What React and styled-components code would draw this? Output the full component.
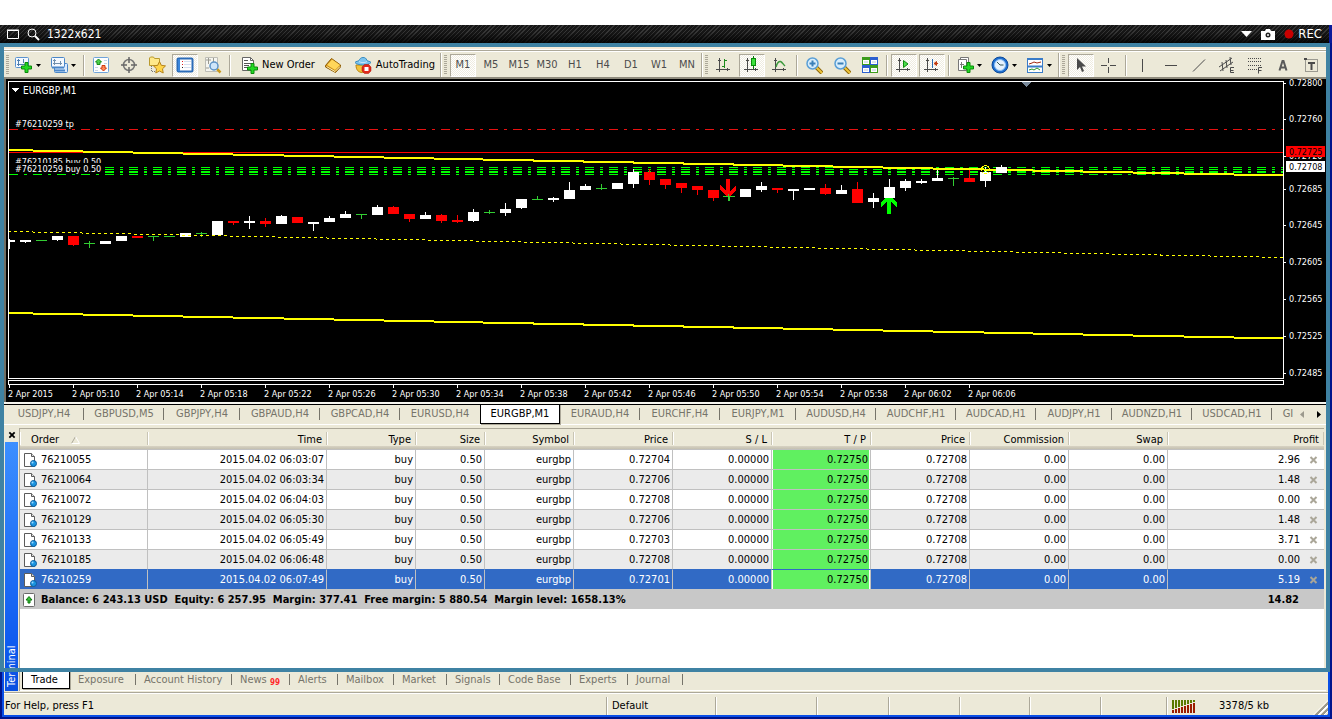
import React from "react";
import styled, { createGlobalStyle, css } from "styled-components";

const CREAM = "#ece9d8";
const GRAY = "#aca899";
const TEAL = "#3f82a3";
const FONT = '"DejaVu Sans Condensed", "DejaVu Sans", sans-serif';

const GlobalStyle = createGlobalStyle`
  *, *::before, *::after { box-sizing: border-box; }
  body { margin: 0; background: #fff; font: 11px/14px ${FONT}; color: #000; }
  button { font: inherit; color: inherit; border: 0; padding: 0; margin: 0; background: none; }
  svg { display: block; flex: none; }
`;

const Page = styled.div`
  display: flex;
  flex-direction: column;
  min-height: 100vh;
  padding-top: 25px;
`;

/* ---------- recorder bar ---------- */

const RecorderBar = styled.header`
  display: flex;
  align-items: center;
  justify-content: space-between;
  height: 18px;
  padding: 0 7px;
  border-right: 3px solid #0a1a9a;
  background:
    linear-gradient(rgba(0, 0, 0, 0) 40%, rgba(0, 0, 0, 0.85)),
    repeating-linear-gradient(135deg, #161616 0 2px, #363636 2px 3px);
  color: #fff;
  font-size: 12px;
`;

const RecorderGroup = styled.div`
  display: flex;
  align-items: center;
  gap: ${(p) => p.$gap}px;
`;

const RecordLabel = styled.span`
  font-size: 13px;
`;

/* ---------- window shell ---------- */

const Window = styled.main`
  position: relative;
  flex: 1;
  display: flex;
  flex-direction: column;
  padding-top: 4px;
  border: 2px solid #00148c;
  border-top: 0;
  background: ${CREAM};
`;

const WindowInner = styled.div`
  flex: 1;
  display: flex;
  flex-direction: column;
  min-width: 0;
  border: 2px solid #0a4fe6;
  border-top: 0;
`;

const CaptureFrame = styled.div`
  position: absolute;
  top: 0;
  left: -2px;
  right: 0;
  bottom: 45px;
  border: 4px solid ${TEAL};
  pointer-events: none;
`;

/* ---------- toolbar ---------- */

const Toolbar = styled.div`
  display: flex;
  height: 32px;
  border-top: 2px solid #f7ecd9;
  border-bottom: 2px solid #8f8b7d;
  box-shadow: inset 0 1px #fff, inset 0 2px ${GRAY}, inset 0 3px #fff;
  padding-top: 4px;
  overflow: hidden;
`;

const ToolGroup = styled.div`
  display: flex;
  align-items: center;
  flex: none;
  gap: 2px;
  padding-left: 2px;
  border-right: 1px solid ${GRAY};
  box-shadow: 1px 0 #fff;
  margin-right: 1px;
  padding-right: ${(p) => p.$end || 0}px;
  color: #4c4c4c;
  &:last-child { border-right: 0; box-shadow: none; }
`;

const Grip = styled.span`
  width: 3px;
  height: 20px;
  margin-right: 1px;
  background: repeating-linear-gradient(${GRAY} 0 1px, transparent 1px 2px);
`;

const Divider = styled.span`
  width: 2px;
  height: 21px;
  margin: 0 1px;
  border-left: 1px solid ${GRAY};
  border-right: 1px solid #fff;
`;

const ToolButton = styled.button`
  display: flex;
  align-items: center;
  justify-content: center;
  width: 26px;
  height: 23px;
  ${(p) =>
    p.$pressed &&
    css`
      border: 1px solid;
      border-color: ${GRAY} #fff #fff ${GRAY};
      background: conic-gradient(#fff 25%, #efece0 0 50%, #fff 0 75%, #efece0 0) 0 0 / 2px 2px;
    `}
`;

const DropButton = styled(ToolButton)`
  width: 33px;
  justify-content: flex-start;
  gap: 3px;
  padding-left: 3px;
`;

const TextButton = styled(ToolButton)`
  width: auto;
  gap: 4px;
  padding: 0 3px 0 6px;
  color: #000;
  white-space: nowrap;
`;

/* ---------- chart ---------- */

const ChartPane = styled.section`
  display: grid;
  grid-template-columns: minmax(0, 1fr) 44px;
  padding: 2px 0 0 2px;
  border-left: 2px solid #716f64;
  background: #000;
  color: #fff;
  overflow: hidden;
`;

const Plot = styled.div`
  height: 298px;
  border: 1px solid #fff;
`;

const ScrollStrip = styled.div`
  height: 5px;
  margin-top: 1px;
  border: 1px solid #fff;
`;

const TimeAxis = styled.div`
  display: flex;
  grid-column: 1 / -1;
  height: 17px;
  overflow: hidden;
  font-size: 9px;
  line-height: 18px;
`;

const TimeLabel = styled.span`
  flex: none;
  width: 64px;
  white-space: nowrap;
  background: linear-gradient(#fff, #fff) 1px 0 / 1px 3px no-repeat;
`;

/* ---------- tab strips ---------- */

const ChartTabs = styled.nav`
  display: flex;
  height: 23px;
  padding-bottom: 1px;
  border-top: 2px solid #f6f5ee;
  box-shadow: inset 0 1px #000, inset 0 -1px #fff;
  color: #76746a;
`;

const ChartTab = styled.button`
  flex: none;
  width: ${(p) => (p.$short ? 76 : 80)}px;
  height: 20px;
  background: linear-gradient(#76746a, #76746a) right 4px / 1px 12px no-repeat;
  ${(p) => p.$bare && "background: none;"}
  ${(p) =>
    p.$active &&
    css`
      border: 1px solid #000;
      background: #fff;
      color: #000;
      box-shadow: 1px 1px ${GRAY};
    `}
`;

const LastTab = styled.button`
  width: 24px;
  height: 20px;
  overflow: hidden;
  padding-left: 8px;
`;

const TabArrows = styled.div`
  display: flex;
  align-items: center;
  gap: 13px;
  margin-left: auto;
  padding-right: 7px;
`;

/* ---------- terminal ---------- */

const Terminal = styled.section`
  flex: 1;
  display: flex;
  padding: 3px 4px 1px 0;
`;

const TerminalRail = styled.div`
  display: flex;
  flex-direction: column;
  width: 15px;
  padding: 0 1px;
`;

const CloseButton = styled.button`
  display: flex;
  align-items: center;
  justify-content: center;
  height: 14px;
`;

const RailTitle = styled.div`
  flex: 1;
  background: linear-gradient(#0a50e0, #0f5cf0 20%, #3c8fff);
  color: #fff;
  writing-mode: vertical-rl;
  transform: rotate(180deg);
  padding-top: 4px;
  line-height: 13px;
`;

const TerminalBody = styled.div`
  flex: 1;
  min-width: 0;
  display: flex;
  flex-direction: column;
  border-top: 1px solid ${GRAY};
  border-left: 1px solid ${GRAY};
`;

const TableArea = styled.div`
  flex: 1;
  background: #fff;
`;

const OrdersTable = styled.table`
  width: 100%;
  table-layout: fixed;
  border-collapse: separate;
  border-spacing: 0;
`;

const HeadCell = styled.th`
  height: 20px;
  padding: 2px 5px 0;
  font-weight: normal;
  text-align: right;
  white-space: nowrap;
  background:
    linear-gradient(#c9c5b4, #c9c5b4) right 3px / 1px 13px no-repeat,
    linear-gradient(#fff, #fff) left 3px / 1px 13px no-repeat,
    linear-gradient(${CREAM} 17px, #d8d3c3 17px, #c4c0b0);
  &:first-child { text-align: left; padding-left: 11px; }
`;

const HeadInner = styled.span`
  display: inline-flex;
  align-items: center;
  gap: 12px;
`;

const Row = styled.tr`
  background: ${(p) => (p.$selected ? "#316ac5" : p.$odd ? "#ebebeb" : "#fff")};
  color: ${(p) => (p.$selected ? "#fff" : "#000")};
  & > td { border-top-color: ${(p) => (p.$selected ? "#316ac5" : "#c0c0c0")}; }
`;

const Cell = styled.td`
  height: 20px;
  padding: 0 2px 0 0;
  border-top: 1px solid;
  border-right: 1px solid #c0c0c0;
  text-align: right;
  white-space: nowrap;
  &:last-child { border-right: 0; }
  ${(p) =>
    p.$target &&
    css`
      background: #60f060;
      color: #000;
      box-shadow: inset 1px 0 #fff, inset -1px 0 #fff;
    `}
`;

const CellInner = styled.span`
  display: flex;
  align-items: center;
  justify-content: ${(p) => (p.$end ? "flex-end" : "flex-start")};
  gap: ${(p) => p.$gap}px;
  padding: ${(p) => (p.$end ? "0 4px 0 0" : "0 0 0 3px")};
`;

const SummaryCell = styled.td`
  height: 20px;
  padding: 1px 0 0;
  background: #c8c8c8;
  font-weight: bold;
  white-space: pre;
  text-align: right;
  &:last-child { padding-right: 25px; }
`;

const PanelTabs = styled.nav`
  display: flex;
  height: 20px;
  padding-left: 2px;
  margin-right: -2px;
  background: ${CREAM};
  border-bottom: 1px solid #fff;
  color: #76746a;
`;

const PanelTab = styled.button`
  flex: none;
  width: ${(p) => p.$w}px;
  height: 18px;
  padding-left: 8px;
  text-align: left;
  white-space: nowrap;
  background: linear-gradient(#76746a, #76746a) right 3px / 1px 11px no-repeat;
  ${(p) =>
    p.$bare && "background: none;"}
  ${(p) =>
    p.$active &&
    css`
      border: 1px solid #000;
      border-top: 0;
      background: #fff;
      color: #000;
      box-shadow: 1px 1px ${GRAY};
    `}
`;

const Unread = styled.sub`
  color: #ff2a2a;
  font-size: 8px;
  font-weight: bold;
  line-height: 9px;
  vertical-align: -2px;
`;

/* ---------- status bar ---------- */

const StatusBar = styled.footer`
  display: flex;
  align-items: flex-end;
  height: 23px;
  background: ${CREAM};
  box-shadow: inset 0 1px ${GRAY}, inset 0 2px #fff;
`;

const StatusText = styled.span`
  flex: 1;
  padding-left: 1px;
  line-height: 18px;
`;

const StatusCell = styled.span`
  flex: none;
  display: flex;
  align-items: center;
  width: ${(p) => p.$w}px;
  height: 18px;
  padding-left: 5px;
  gap: 23px;
  border-left: 1px solid ${GRAY};
  box-shadow: inset 1px 0 #fff;
`;

const SizeGrip = styled.span`
  width: 15px;
  height: 15px;
  margin-left: auto;
  align-self: flex-end;
  background: repeating-linear-gradient(135deg, #9d9a8c 0 2px, #fff 2px 3px, ${CREAM} 3px 4px);
  clip-path: polygon(100% 0, 100% 100%, 0 100%);
`;

/* ---------- icons ---------- */

const Svg = ({ size = 18, children, ...rest }) => (
  <svg width={size} height={size} viewBox="0 0 18 18" fill="none" aria-hidden="true" {...rest}>
    {children}
  </svg>
);

const Plus = ({ x = 7, y = 7 }) => (
  <path
    transform={`translate(${x} ${y})`}
    d="M4 .5h3V4h3.500v3H7v3.500H4V7H.5V4H4z"
    fill="#22d822"
    stroke="#0a8a0a"
  />
);

const Caret = () => (
  <svg width="5" height="3" viewBox="0 0 5 3" aria-hidden="true">
    <path d="M0 0h5L2.500 3z" fill="#000" />
  </svg>
);

const Axes = ({ color = "#4a4a4a" }) => (
  <path
    d="M4.500 2v14M1 13.500h14M3 4.500h3M12.500 12v3"
    stroke={color}
    shapeRendering="crispEdges"
  />
);

const icons = {
  newChart: (
    <Svg>
      <rect x="0.500" y="1.500" width="13" height="10" rx="1" fill="#f4f9ff" stroke="#5b93cf" />
      <path d="M3.500 3v7M2 8.500h9M2 4.500h3M8.500 3v4" stroke="#4f7fae" />
      <Plus x={6} y={6} />
    </Svg>
  ),
  profiles: (
    <Svg>
      <rect x="4.500" y="7.500" width="13" height="9" rx="1" fill="#d9eaff" stroke="#4a86c8" />
      <rect x="1.500" y="1.500" width="13" height="10" rx="1" fill="#f4f9ff" stroke="#4a86c8" />
      <path d="M2 11.500h12M5 14.500h10" stroke="#4a86c8" strokeWidth="2" />
      <path d="M4.500 3v6M3 7.500h9M10.500 5v4M3 4.500h3" stroke="#7390ac" />
    </Svg>
  ),
  market: (
    <Svg>
      <rect x="1.500" y="1.500" width="15" height="15" rx="1" fill="#fdfeff" stroke="#6fa3da" />
      <path d="M12 4.500h3M12 7.500h3M3 11.500h3M3 14.500h3" stroke="#c4d4e6" />
      <path d="M6.500 3l3 3H8v2.500H5V6H3.500z" fill="#4ad04a" stroke="#188a18" />
      <path d="M11.500 15l-3-3H10V9.500h3V12h1.500z" fill="#ff8a5a" stroke="#d03a10" />
    </Svg>
  ),
  target: (
    <Svg>
      <circle cx="9" cy="9" r="5.500" stroke="#777" strokeWidth="1.500" />
      <path d="M9 1v6M9 11v6M1 9h6M11 9h6" stroke="#666" strokeWidth="1.500" />
    </Svg>
  ),
  navigator: (
    <Svg>
      <path d="M1.500 9.500V2l1-1h3l1 1.500h5v7z" fill="#ffe98a" stroke="#b99a2e" />
      <path d="M3.500 10v5.500H8" stroke="#777" strokeDasharray="1 1" />
      <path d="M11.500 5.500l1.800 3.800 4.200.6-3 2.900.7 4.200-3.700-2-3.700 2 .7-4.200-3-2.900 4.200-.6z" fill="#ffd54a" stroke="#b5831a" />
    </Svg>
  ),
  terminal: (
    <Svg>
      <rect x="1.500" y="2.500" width="15" height="13" rx="1" fill="#fff" stroke="#2c6cb8" strokeWidth="2" />
      <path d="M3 3v12" stroke="#3a86dc" strokeWidth="2" />
      <path d="M6 5.500h1M6 8.500h1" stroke="#e02020" />
      <path d="M6 11.500h1" stroke="#222" />
      <path d="M8 5.500h7M8 8.500h7M8 11.500h7" stroke="#d4e0f0" />
    </Svg>
  ),
  tester: (
    <Svg>
      <path d="M1.500 1.500h12v14h-12z" fill="#f6f6f0" stroke="#bdbdb5" />
      <path d="M4.500 2v6M2 4h5M9.500 2v4M2 12h3" stroke="#9a9a90" />
      <path d="M13 13l3.500 3.500" stroke="#c99a1c" strokeWidth="2.500" />
      <circle cx="10" cy="10" r="4" fill="#cfe6fa" stroke="#5e93c6" strokeWidth="1.500" />
    </Svg>
  ),
  newOrder: (
    <Svg>
      <path d="M2.500 1.500h8l3 3v10h-11z" fill="#fff" stroke="#666" />
      <path d="M10.500 1.500v3h3" stroke="#666" />
      <path d="M4 4.500h4M4 7.500h7M4 9.500h5M4 11.500h3" stroke="#555" />
      <Plus x={7} y={7} />
    </Svg>
  ),
  editor: (
    <Svg>
      <path d="M1.500 9.500l6-7 9 6.500v2l-5 5.500L1.500 11z" fill="#c98a12" stroke="#8f5d06" />
      <path d="M3 9l5-5.500 8 5.500-5 5z" fill="#ffd65a" />
      <path d="M2.500 10.500l8.500 5 5-5" stroke="#fff2b8" />
    </Svg>
  ),
  auto: (
    <Svg>
      <path d="M2 9c0 5 2.500 7.500 6.500 7.500S15 14 15 9z" fill="#f2c33a" stroke="#b88410" />
      <path d="M1 6.500c2 3 13 3.500 16 0-1-1.500-3-1-4-2C12 2 11 1.500 9 1.500S6 2.500 5 4.500c-1 1-3 .5-4 2z" fill="#7cc4ee" stroke="#3a8cc0" />
      <path d="M5 5.500c2 1.500 6 1.500 8 0" stroke="#c4e6fa" />
      <path d="M10.500 8.500h4l2.500 2.500v4l-2.500 2.500h-4L8 15v-4z" fill="#e02a1c" stroke="#b01408" strokeWidth=".5" />
      <rect x="10.500" y="11" width="4" height="4" fill="#fff" />
    </Svg>
  ),
  bars: (
    <Svg>
      <Axes />
      <path d="M9.500 3v9M7 10.500h2M10 4.500h2" stroke="#1a8a1a" shapeRendering="crispEdges" />
    </Svg>
  ),
  candles: (
    <Svg>
      <Axes />
      <path d="M10.500 0v13" stroke="#0a7a0a" />
      <rect x="8.500" y="2.500" width="4" height="7" fill="#3be03b" stroke="#0a8a0a" />
    </Svg>
  ),
  line: (
    <Svg>
      <Axes />
      <path d="M5 11c1-4 3-6 4.500-5.500S12 8 14 10" stroke="#3c9a3c" strokeWidth="1.500" />
    </Svg>
  ),
  zoomIn: (
    <Svg>
      <path d="M11 11l6 6" stroke="#8a6408" strokeWidth="4" />
      <path d="M11 11l6 6" stroke="#f0c63a" strokeWidth="2" />
      <circle cx="7.500" cy="7.500" r="5.500" fill="#d8eefc" stroke="#5a9fd6" strokeWidth="1.500" />
      <path d="M7.500 4.500v6M4.500 7.500h6" stroke="#3a80b8" strokeWidth="2" />
    </Svg>
  ),
  zoomOut: (
    <Svg>
      <path d="M11 11l6 6" stroke="#8a6408" strokeWidth="4" />
      <path d="M11 11l6 6" stroke="#f0c63a" strokeWidth="2" />
      <circle cx="7.500" cy="7.500" r="5.500" fill="#d8eefc" stroke="#5a9fd6" strokeWidth="1.500" />
      <path d="M4.500 7.500h6" stroke="#3a80b8" strokeWidth="2" />
    </Svg>
  ),
  tile: (
    <Svg>
      <path d="M1 1h8v8H1zM9 9h8v8H9z" fill="#3c9c1c" />
      <path d="M9 1h8v8H9zM1 9h8v8H1z" fill="#2c5fd0" />
      <path d="M2 4h6v4H2zM10 4h6v4h-6zM2 12h6v4H2zM10 12h6v4h-6z" fill="#fff" />
      <path d="M3 6h4M11 6h4M3 14h4M11 14h4" stroke="#b8c8d8" />
    </Svg>
  ),
  autoScroll: (
    <Svg>
      <Axes />
      <path d="M8.500 4.500l4.500 3.500-4.500 3.500z" fill="#4ade4a" stroke="#0f8a0f" />
    </Svg>
  ),
  shift: (
    <Svg>
      <Axes />
      <path d="M9.500 3v9" stroke="#2a6ab0" />
      <path d="M15 7.500h-3M13.500 5.500l-2.500 2 2.500 2z" stroke="#c23a10" fill="#c23a10" />
    </Svg>
  ),
  indicators: (
    <Svg>
      <path d="M4.500 1.500h8v12h-8z" fill="#fff" stroke="#777" />
      <path d="M2.500 3.500h8v11h-8z" fill="#fff" stroke="#777" />
      <path d="M5.500 6v6M4 8.500h4" stroke="#777" />
      <Plus x={7} y={6} />
    </Svg>
  ),
  clock: (
    <Svg>
      <circle cx="9" cy="9" r="8" fill="#1f6fd0" stroke="#0d4a9a" />
      <circle cx="9" cy="9" r="5.500" fill="#e6f3ff" stroke="#8cc0f4" />
      <path d="M6 6l3 3h3.500" stroke="#355" />
    </Svg>
  ),
  template: (
    <Svg>
      <rect x="1.500" y="2.500" width="15" height="14" fill="#fff" stroke="#3a7cc8" />
      <path d="M1 3h16M2 10.500h14" stroke="#3a7cc8" strokeWidth="2" />
      <path d="M3 8l3-1 2-1 3 1 4-1" stroke="#a02a10" />
      <path d="M3 14l3-1 2 1 3-2 3 2" stroke="#2a9a2a" />
    </Svg>
  ),
  cursor: (
    <Svg>
      <path d="M5 2v12l3-3 2 5 2-1-2-4.500h4z" fill="#4a4a4a" />
    </Svg>
  ),
  cross: (
    <Svg shapeRendering="crispEdges">
      <path d="M8.500 2v5M8.500 11v6M1 9.500h6M10 9.500h6" stroke="#4a4a4a" />
    </Svg>
  ),
  vline: (
    <Svg shapeRendering="crispEdges"><path d="M8.500 3v13" stroke="#4a4a4a" /></Svg>
  ),
  hline: (
    <Svg shapeRendering="crispEdges"><path d="M3 9.500h12" stroke="#4a4a4a" /></Svg>
  ),
  trend: (
    <Svg><path d="M3 15.500L15 3.500" stroke="#4a4a4a" /></Svg>
  ),
  channel: (
    <Svg>
      <path d="M1 11L14 2M2 15L15 6M4 6l1 9M8 4l1 8M12 1l1 8" stroke="#4a4a4a" />
      <path d="M16 11.500h-3.500v5H16M12.500 14.500h3" stroke="#4a4a4a" />
    </Svg>
  ),
  fibo: (
    <Svg>
      <path d="M2 2.500h14M2 5.500h14M2 9.500h14M2 13.500h9" stroke="#4a4a4a" strokeDasharray="1 1" />
      <path d="M16 11.500h-3.500v6M12.500 14.500h3" stroke="#4a4a4a" />
    </Svg>
  ),
  letter: (
    <Svg><path d="M5.500 14.500L8.500 5h1l3 9.500M6.500 11.500h5" stroke="#5a5a5a" strokeWidth="2" /></Svg>
  ),
  label: (
    <Svg>
      <rect x="3.500" y="3.500" width="12" height="12" stroke="#4a4a4a" strokeDasharray="1 1" />
      <path d="M6 7h7M9.500 7v7M2 3h3" stroke="#4a4a4a" strokeWidth="2" />
    </Svg>
  ),
};

const OrderIcon = () => (
  <svg width="15" height="16" viewBox="0 0 15 16" fill="none" aria-hidden="true">
    <path d="M1.500 1.500h7l3 3v10h-10z" fill="#fff" stroke="#5c5c5c" />
    <path d="M8.500 1.500v3h3" fill="#ddd" stroke="#5c5c5c" />
    <circle cx="10.500" cy="11.500" r="3" fill="#1a94e0" stroke="#0c5c9c" />
    <circle cx="9.500" cy="10.500" r="1" fill="#9ad8ff" />
  </svg>
);

const BalanceIcon = () => (
  <svg width="12" height="14" viewBox="0 0 12 14" fill="none" aria-hidden="true">
    <rect x=".5" y=".5" width="11" height="13" rx="1" fill="#fff" stroke="#6a6a6a" />
    <path d="M6 3.500l3 3.500H7v3H5V7H3z" fill="#3cc03c" stroke="#0c7a0c" />
  </svg>
);

const Cross = ({ color, size = 9 }) => (
  <svg width={size} height="8" viewBox="0 0 9 8" aria-hidden="true">
    <path d="M1.500 1l6 6M7.500 1l-6 6" stroke={color} strokeWidth="2" />
  </svg>
);

/* ---------- data ---------- */

// [bodyTop, bodyBottom, high, low, kind], one candle per minute
const CANDLES = [
  [240, 242, 239, 249, "w"], [240, 242, 240, 243, "w"], [240, 241, 240, 241, "g"],
  [236, 240, 236, 241, "w"], [236, 245, 236, 246, "r"], [243, 244, 241, 248, "g"],
  [241, 244, 241, 244, "w"], [236, 241, 236, 241, "w"], [236, 238, 236, 238, "r"],
  [236, 237, 236, 241, "g"], [236, 237, 236, 237, "g"], [233, 237, 233, 237, "w"],
  [233, 234, 232, 237, "g"], [221, 235, 221, 235, "w"], [221, 223, 221, 225, "r"],
  [221, 223, 216, 229, "w"], [221, 224, 218, 227, "r"], [216, 224, 215, 224, "w"],
  [217, 223, 217, 223, "r"], [222, 224, 222, 231, "w"], [218, 222, 216, 222, "w"],
  [214, 218, 211, 218, "w"], [214, 215, 214, 219, "g"], [207, 215, 205, 215, "w"],
  [207, 214, 206, 214, "r"], [214, 219, 214, 222, "r"], [215, 219, 212, 219, "w"],
  [215, 221, 214, 223, "r"], [220, 222, 215, 223, "r"], [212, 221, 209, 222, "w"],
  [212, 213, 210, 214, "g"], [209, 213, 203, 216, "w"], [199, 208, 199, 209, "w"],
  [199, 200, 196, 200, "g"], [198, 200, 197, 202, "w"], [190, 199, 182, 199, "w"],
  [186, 190, 184, 190, "w"], [188, 189, 184, 190, "g"], [183, 189, 183, 189, "w"],
  [172, 184, 169, 188, "w"], [172, 180, 169, 185, "r"], [179, 185, 179, 189, "r"],
  [183, 188, 183, 193, "r"], [186, 190, 186, 195, "r"], [190, 198, 190, 201, "r"],
  [196, 197, 194, 201, "g"], [189, 197, 189, 197, "w"], [186, 190, 182, 192, "w"],
  [188, 190, 188, 193, "r"], [189, 191, 189, 200, "w"], [188, 190, 188, 190, "w"],
  [188, 194, 184, 195, "r"], [190, 194, 185, 194, "w"], [189, 203, 182, 203, "r"],
  [198, 202, 193, 208, "w"], [187, 198, 179, 198, "w"], [181, 188, 179, 191, "w"],
  [181, 183, 179, 184, "w"], [178, 181, 169, 181, "w"], [178, 179, 177, 186, "g"],
  [178, 182, 170, 182, "r"], [172, 181, 167, 187, "w"], [167, 173, 165, 173, "w"],
];
const CANDLE_COLORS = { w: "#fff", r: "#f00", g: "#32cd32" };

const PRICES = [
  ["0.72800", 83], ["0.72760", 119], ["0.72720", 156], ["0.72685", 189], ["0.72645", 225],
  ["0.72605", 262], ["0.72565", 299], ["0.72525", 336], ["0.72485", 373],
];

const TIMES = [
  "2 Apr 2015", "2 Apr 05:10", "2 Apr 05:14", "2 Apr 05:18", "2 Apr 05:22", "2 Apr 05:26",
  "2 Apr 05:30", "2 Apr 05:34", "2 Apr 05:38", "2 Apr 05:42", "2 Apr 05:46", "2 Apr 05:50",
  "2 Apr 05:54", "2 Apr 05:58", "2 Apr 06:02", "2 Apr 06:06",
];

const CHART_TABS = [
  ["USDJPY,H4"], ["GBPUSD,M5"], ["GBPJPY,H4", true], ["GBPAUD,H4"], ["GBPCAD,H4"], ["EURUSD,H4"],
  ["EURGBP,M1"], ["EURAUD,H4"], ["EURCHF,H4"], ["EURJPY,M1", true], ["AUDUSD,H4"],
  ["AUDCHF,H1"], ["AUDCAD,H1"], ["AUDJPY,H1", true], ["AUDNZD,H1"], ["USDCAD,H1"],
];

const COLUMNS = [
  ["Order", 128], ["Time", 179], ["Type", 89], ["Size", 69], ["Symbol", 89], ["Price", 99],
  ["S / L", 99], ["T / P", 99], ["Price", 99], ["Commission", 99], ["Swap", 99], ["Profit"],
];

const ORDERS = [
  ["76210055", "06:03:07", "0.72704", "2.96"],
  ["76210064", "06:03:34", "0.72706", "1.48"],
  ["76210072", "06:04:03", "0.72708", "0.00"],
  ["76210129", "06:05:30", "0.72706", "1.48"],
  ["76210133", "06:05:49", "0.72703", "3.71"],
  ["76210185", "06:06:48", "0.72708", "0.00"],
  ["76210259", "06:07:49", "0.72701", "5.19"],
];

const PANEL_TABS = [
  ["Trade", 48], ["Exposure", 66], ["Account History", 96], ["News", 58], ["Alerts", 48],
  ["Mailbox", 56], ["Market", 53], ["Signals", 53], ["Code Base", 71], ["Experts", 57],
  ["Journal", 55],
];

const SUMMARY =
  "Balance: 6 243.13 USD  Equity: 6 257.95  Margin: 377.41  Free margin: 5 880.54  Margin level: 1658.13%";

/* ---------- parts ---------- */

const Tool = ({ icon, label, pressed }) => (
  <ToolButton type="button" aria-label={label} $pressed={pressed}>{icons[icon]}</ToolButton>
);

const Drop = ({ icon, label }) => (
  <DropButton type="button" aria-label={label}>
    {icons[icon]}
    <Caret />
  </DropButton>
);

const TIMEFRAMES = ["M1", "M5", "M15", "M30", "H1", "H4", "D1", "W1", "MN"];

const MainToolbar = () => (
  <Toolbar role="toolbar">
    <ToolGroup $end={2}>
      <Grip />
      <Drop icon="newChart" label="New chart" />
      <Drop icon="profiles" label="Profiles" />
      <Divider />
      <Tool icon="market" label="Market Watch" />
      <Tool icon="target" label="Data Window" />
      <Tool icon="navigator" label="Navigator" />
      <Tool icon="terminal" label="Terminal" pressed />
      <Tool icon="tester" label="Strategy Tester" />
      <Divider />
      <TextButton type="button">{icons.newOrder}New Order</TextButton>
      <Tool icon="editor" label="MetaEditor" />
      <TextButton type="button">{icons.auto}AutoTrading</TextButton>
    </ToolGroup>
    <ToolGroup $end={1}>
      <Grip />
      {TIMEFRAMES.map((t) => (
        <ToolButton key={t} type="button" $pressed={t === "M1"}>{t}</ToolButton>
      ))}
    </ToolGroup>
    <ToolGroup $end={2}>
      <Grip />
      <Tool icon="bars" label="Bar chart" />
      <Tool icon="candles" label="Candlesticks" pressed />
      <Tool icon="line" label="Line chart" />
      <Divider />
      <Tool icon="zoomIn" label="Zoom in" />
      <Tool icon="zoomOut" label="Zoom out" />
      <Tool icon="tile" label="Tile windows" />
      <Divider />
      <Tool icon="autoScroll" label="Auto scroll" pressed />
      <Tool icon="shift" label="Chart shift" pressed />
      <Divider />
      <Drop icon="indicators" label="Indicators" />
      <Drop icon="clock" label="Periods" />
      <Drop icon="template" label="Templates" />
    </ToolGroup>
    <ToolGroup>
      <Grip />
      <Tool icon="cursor" label="Cursor" pressed />
      <Tool icon="cross" label="Crosshair" />
      <Divider />
      <Tool icon="vline" label="Vertical line" />
      <Tool icon="hline" label="Horizontal line" />
      <Tool icon="trend" label="Trendline" />
      <Tool icon="channel" label="Channel" />
      <Tool icon="fibo" label="Fibonacci" />
      <Tool icon="letter" label="Text" />
      <Tool icon="label" label="Text label" />
    </ToolGroup>
  </Toolbar>
);

const dash = "9 6 3 6";

const PriceChart = () => (
  <svg width="100%" height="296" fontFamily={FONT} fontSize="9" shapeRendering="crispEdges">
    <g transform="translate(-9 -82)">
      <path d="M9 129.500H3000" stroke="#e81010" strokeDasharray={dash} />
      <path d="M9 152.500H3000" stroke="#f00" />
      <g stroke="#0f0" strokeDasharray={dash}>
        <path d="M9 167.500H3000M9 169.500H3000M9 174.500H3000" />
        <path d="M9 172H3000" strokeWidth="2" />
      </g>
      <text x="15" y="165" fill="#fff">#76210185 buy 0.50</text>
      <path d="M9 163h94v11H9z" fill="#000" />
      <text x="15" y="172" fill="#fff">#76210259 buy 0.50</text>
      <text x="15" y="127" fill="#fff">#76210259 tp</text>
      {CANDLES.map(([top, bottom, high, low, kind], i) => {
        const x = 9 + i * 16;
        return (
          <g key={i} fill={CANDLE_COLORS[kind]}>
            <rect x={x - 5} y={top} width="11" height={bottom - top} />
            <rect x={x} y={high} width="1" height={low - high} />
          </g>
        );
      })}
      <path d="M8 231.500L1283 257.500" stroke="#ff0" strokeDasharray="3 3" />
      <g stroke="#ff0" strokeWidth="2">
        <path d="M8 150L1283 175.500M8 313L1283 338.500" />
      </g>
      <path d="M726 179h4v12l6-6v5l-8 8-8-8v-5l6 6z" fill="#f00" />
      <path d="M723 196.500h11M728.500 194v7" stroke="#32cd32" />
      <path d="M887 214h4v-12l6 5v-4l-4-5h-8l-4 5v4l6-5z" fill="#0f0" />
      <path d="M980 172h11v9h-11zM996 167h11v6h-11z" fill="#fff" />
      <circle cx="985.500" cy="169.500" r="4" fill="none" stroke="#ff0" />
      <path d="M1021 82h11l-5.500 5z" fill="#778899" />
      <path d="M12 88h7l-3.500 4z" fill="#fff" />
      <text x="23" y="94" fontSize="10" fill="#fff">EURGBP,M1</text>
    </g>
  </svg>
);

const PriceScale = () => (
  <svg width="44" height="298" fontFamily={FONT} fontSize="9" fill="#fff" overflow="visible">
    <g transform="translate(0 -81)">
      {PRICES.map(([price, y]) => (
        <g key={price}>
          <rect x="0" y={y} width="2" height="1" />
          <text x="5" y={y + 3}>{price}</text>
        </g>
      ))}
      <rect x="2" y="146" width="39" height="11" fill="#f00" />
      <text x="5" y="155" fill="#000">0.72725</text>
      <rect x="2" y="161" width="39" height="11" />
      <text x="5" y="170" fill="#000">0.72708</text>
    </g>
  </svg>
);

const Connection = () => (
  <svg width="24" height="13" shapeRendering="crispEdges" aria-hidden="true">
    {[0, 1, 2, 3, 4, 5, 6, 7].map((i) => (
      <g key={i}>
        <rect x={i * 3} y="0" width="2" height={9 - i} fill="#5a7a00" />
        <rect x={i * 3} y={10 - i} width="2" height={3 + i} fill="#9c1c00" />
      </g>
    ))}
  </svg>
);

export default function App() {
  return (
    <Page>
      <GlobalStyle />
      <RecorderBar>
        <RecorderGroup $gap={7}>
          <svg width="12" height="10" aria-hidden="true">
            <path d="M.5 1.500h11v8H.5zM0 1h12" fill="none" stroke="#fff" />
          </svg>
          <svg width="14" height="14" viewBox="0 0 14 14" fill="none" stroke="#fff" aria-hidden="true">
            <circle cx="6" cy="6" r="4" />
            <path d="M9 9l4 4" strokeWidth="2" />
          </svg>
          <span>1322x621</span>
        </RecorderGroup>
        <RecorderGroup $gap={9}>
          <svg width="11" height="6" aria-hidden="true"><path d="M0 0h11L5.500 6z" fill="#fff" /></svg>
          <svg width="14" height="11" viewBox="0 0 14 11" aria-hidden="true">
            <path d="M0 2h4l1-2h4l1 2h4v9H0z" fill="#fff" />
            <circle cx="7" cy="6" r="2.500" fill="#222" />
            <circle cx="7" cy="6" r="1" fill="#fff" />
          </svg>
          <RecorderGroup $gap={4}>
            <svg width="10" height="10" aria-hidden="true"><circle cx="5" cy="5" r="4.500" fill="#c80000" /></svg>
            <RecordLabel>REC</RecordLabel>
          </RecorderGroup>
        </RecorderGroup>
      </RecorderBar>

      <Window>
        <WindowInner>
          <MainToolbar />
          <ChartPane>
            <Plot><PriceChart /></Plot>
            <PriceScale />
            <ScrollStrip />
            <TimeAxis>
              {TIMES.map((t) => <TimeLabel key={t}>{t}</TimeLabel>)}
            </TimeAxis>
          </ChartPane>

          <ChartTabs>
            {CHART_TABS.map(([name, short]) => (
              <ChartTab
                key={name}
                type="button"
                $short={short}
                $bare={name === "EURUSD,H4"}
                $active={name === "EURGBP,M1"}
              >
                {name}
              </ChartTab>
            ))}
            <LastTab type="button">GI</LastTab>
            <TabArrows>
              <svg width="4" height="7" aria-hidden="true"><path d="M4 0v7L0 3.500z" fill="#9c9a8e" /></svg>
              <svg width="4" height="7" aria-hidden="true"><path d="M0 0v7l4-3.500z" fill="#000" /></svg>
            </TabArrows>
          </ChartTabs>

          <Terminal>
            <TerminalRail>
              <CloseButton type="button" aria-label="Close"><Cross color="#000" size={8} /></CloseButton>
              <RailTitle>Terminal</RailTitle>
            </TerminalRail>
            <TerminalBody>
              <TableArea>
                <OrdersTable>
                  <colgroup>
                    {COLUMNS.map(([name, w], i) => <col key={i} width={w} />)}
                  </colgroup>
                  <thead>
                    <tr>
                      {COLUMNS.map(([name], i) => (
                        <HeadCell key={i} scope="col">
                          {i === 0 ? (
                            <HeadInner>
                              {name}
                              <svg width="9" height="8" aria-hidden="true">
                                <path d="M.5 7.500L4.500.5" stroke={GRAY} />
                                <path d="M4.500.5l4 7h-8" fill="none" stroke="#fff" />
                              </svg>
                            </HeadInner>
                          ) : name}
                        </HeadCell>
                      ))}
                    </tr>
                  </thead>
                  <tbody>
                    {ORDERS.map(([id, time, price, profit], i) => (
                      <Row key={id} $odd={i % 2 === 1} $selected={id === "76210259"}>
                        <Cell><CellInner $gap={3}><OrderIcon />{id}</CellInner></Cell>
                        <Cell>2015.04.02 {time}</Cell>
                        <Cell>buy</Cell>
                        <Cell>0.50</Cell>
                        <Cell>eurgbp</Cell>
                        <Cell>{price}</Cell>
                        <Cell>0.00000</Cell>
                        <Cell $target>0.72750</Cell>
                        <Cell>0.72708</Cell>
                        <Cell>0.00</Cell>
                        <Cell>0.00</Cell>
                        <Cell>
                          <CellInner $end $gap={9}>
                            {profit}
                            <CloseButton type="button" aria-label={`Close order ${id}`}>
                              <Cross color="#aaa698" />
                            </CloseButton>
                          </CellInner>
                        </Cell>
                      </Row>
                    ))}
                  </tbody>
                  <tfoot>
                    <tr>
                      <SummaryCell colSpan={11}>
                        <CellInner $gap={6}><BalanceIcon />{SUMMARY}</CellInner>
                      </SummaryCell>
                      <SummaryCell>14.82</SummaryCell>
                    </tr>
                  </tfoot>
                </OrdersTable>
              </TableArea>
              <PanelTabs>
                {PANEL_TABS.map(([name, w]) => (
                  <PanelTab key={name} type="button" $w={w} $active={name === "Trade"}>
                    {name}
                    {name === "News" && <> <Unread>99</Unread></>}
                  </PanelTab>
                ))}
              </PanelTabs>
            </TerminalBody>
          </Terminal>

          <StatusBar>
            <StatusText>For Help, press F1</StatusText>
            <StatusCell $w={109}>Default</StatusCell>
            <StatusCell $w={101} />
            <StatusCell $w={72} />
            <StatusCell $w={71} />
            <StatusCell $w={70} />
            <StatusCell $w={71} />
            <StatusCell $w={66} />
            <StatusCell $w={162}>
              <Connection />
              3378/5 kb
              <SizeGrip />
            </StatusCell>
          </StatusBar>
        </WindowInner>
        <CaptureFrame />
      </Window>
    </Page>
  );
}
